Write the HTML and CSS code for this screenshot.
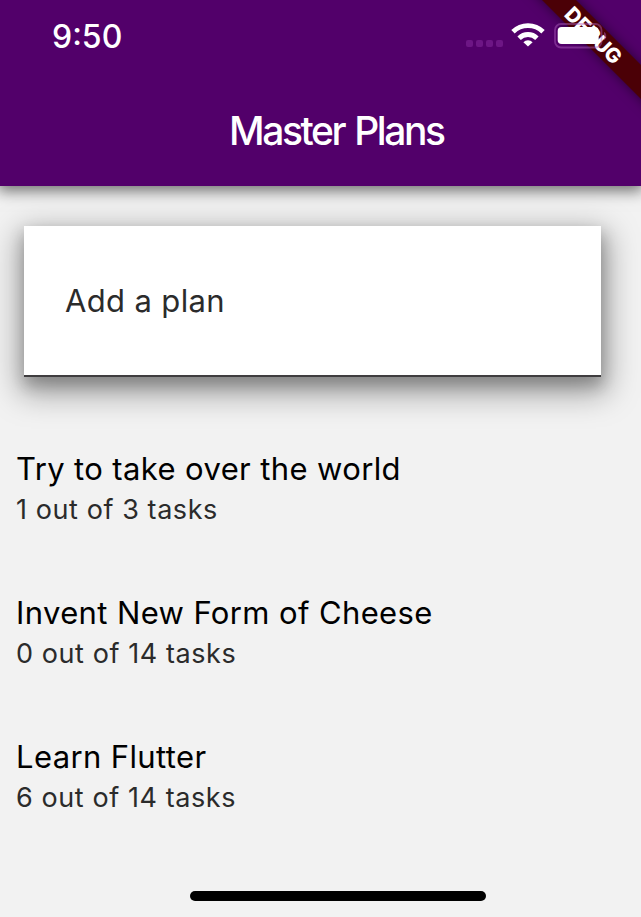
FILE: index.html
```html
<!DOCTYPE html>
<html lang="en">
<head>
<meta charset="utf-8">
<title>Master Plans</title>
<link rel="stylesheet" href="styles.css">
</head>
<body>
<div class="screen">
  <header class="app-bar">
    <div class="status-bar">
      <span class="time">9:50</span>
      <div class="status-icons">
        <div class="signal"><i></i><i></i><i></i><i></i></div>
        <svg class="wifi" width="34" height="24" viewBox="0 0 34 24" fill="none" stroke="#fff" stroke-width="4.8">
          <path d="M2 8.8a21.3 21.3 0 0 1 30 0"/>
          <path d="M8.1 15.2a12.6 12.6 0 0 1 17.8 0"/>
          <path d="M17 23.6l-4.6-4.4a6.6 6.6 0 0 1 9.2 0z" fill="#fff" stroke="none"/>
        </svg>
        <svg class="battery" width="54" height="26" viewBox="0 0 54 26">
          <rect x="1" y="1" width="46.5" height="23.5" rx="6" fill="none" stroke="#b25fc2" stroke-opacity=".45" stroke-width="1.8"/>
          <path d="M50 9c3 1 3 7 0 8z" fill="#b25fc2" fill-opacity=".45"/>
          <rect x="3.7" y="4" width="41" height="17" rx="4" fill="#fff"/>
        </svg>
      </div>
    </div>
    <h1 class="title">Master Plans</h1>
    <div class="banner"><div class="ribbon">DEBUG</div></div>
  </header>
  <main class="content">
    <div class="field"><span class="hint">Add a plan</span></div>
    <ul class="plans">
      <li class="plan"><span class="name">Try to take over the world</span><span class="progress">1 out of 3 tasks</span></li>
      <li class="plan"><span class="name">Invent New Form of Cheese</span><span class="progress">0 out of 14 tasks</span></li>
      <li class="plan"><span class="name">Learn Flutter</span><span class="progress">6 out of 14 tasks</span></li>
    </ul>
  </main>
  <div class="home-indicator"></div>
</div>
</body>
</html>
```
FILE: styles.css
```css
* { box-sizing: border-box; }
body { margin: 0; font-family: Inter, "Liberation Sans", sans-serif; }
.screen {
  width: 641px;
  height: 917px;
  overflow: hidden;
  display: flex;
  flex-direction: column;
  align-items: center;
  background: #f2f2f2;
}
.app-bar {
  position: relative;
  width: 100%;
  height: 186px;
  flex: none;
  background: #52006a;
  box-shadow: 0 3px 14px 2px rgba(0,0,0,.54);
}
.status-bar {
  height: 72px;
  padding: 0 34px 0 52px;
  display: flex;
  justify-content: space-between;
  align-items: center;
  color: #fff;
}
.time { font-size: 32px; font-weight: 500; letter-spacing: 0; line-height: 40px; padding-top: 1px; }
.status-icons {
  position: relative;
  z-index: 2;
  display: flex;
  align-items: flex-start;
}
.signal { display: flex; gap: 3px; margin: 17px 8px 0 0; }
.signal i { width: 7px; height: 7px; border-radius: 2px; background: #6d1685; }
.battery { margin-left: 9px; margin-right: -1px; }
.title {
  margin: 35px 0 0 229px;
  font-size: 39px;
  font-weight: 500;
  line-height: 48px;
  letter-spacing: -2.4px;
  word-spacing: 2px;
  color: #fff;
  white-space: nowrap;
}
.banner {
  position: absolute;
  top: 0;
  right: 0;
  width: 120px;
  height: 130px;
  overflow: hidden;
}
.ribbon {
  position: absolute;
  left: -27.5px;
  top: 22.5px;
  width: 200px;
  height: 24px;
  transform: rotate(45deg);
  background: #4b0006;
  box-shadow: 0 0 12px rgba(0,0,0,.5);
  color: #fff;
  font-size: 20.4px;
  font-weight: 800;
  line-height: 26px;
  text-align: center;
}
.content { width: 100%; flex: 1; padding: 40px 0 0; }
.field {
  width: 577px;
  height: 151px;
  margin-left: 24px;
  padding: 0 41px;
  display: flex;
  align-items: center;
  background: #fff;
  border-bottom: 2px solid #3f3d3f;
  box-shadow: 1px 8px 14px 1px rgba(0,0,0,.2), 1px 11px 30px 5px rgba(0,0,0,.36);
}
.hint { font-size: 31px; line-height: 40px; letter-spacing: .35px; color: #2b2b2b; }
.plans { list-style: none; margin: 72px 0 0; padding: 0 16px; }
.plan { height: 144px; display: flex; flex-direction: column; }
.name { font-size: 31px; line-height: 40px; letter-spacing: .38px; color: #000; }
.progress { font-size: 27px; line-height: 42px; letter-spacing: .58px; color: #2b2b2b; }
.home-indicator {
  width: 296px;
  height: 10px;
  flex: none;
  margin: 0 0 16px 35px;
  border-radius: 5px;
  background: #000;
}
```
